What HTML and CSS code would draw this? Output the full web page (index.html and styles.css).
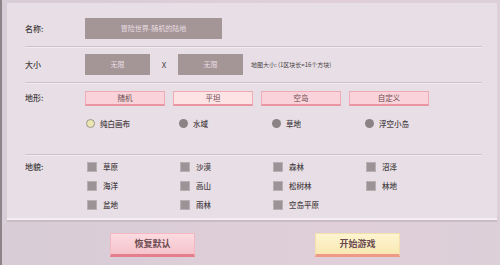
FILE: index.html
```html
<!DOCTYPE html>
<html lang="zh">
<head>
    <meta charset="UTF-8">
    <title>创建世界</title>
    <link rel="stylesheet" href="styles.css">
</head>
<body>
    <div class="panel">
        <!-- 名称 -->
        <div class="row row-name">
            <div class="label">名称:</div>
            <div class="field field-wide">冒险世界-随机的陆地</div>
        </div>

        <!-- 大小 -->
        <div class="row row-size">
            <div class="label">大小</div>
            <div class="field field-small">无限</div>
            <div class="times">X</div>
            <div class="field field-small">无限</div>
            <div class="hint">地图大小: (1区块长=16个方块)</div>
        </div>

        <!-- 地形 -->
        <div class="row row-terrain">
            <div class="label">地形:</div>
            <div class="terrain">
                <div class="tabs">
                    <div class="tab">随机</div>
                    <div class="tab">平坦</div>
                    <div class="tab">空岛</div>
                    <div class="tab">自定义</div>
                </div>
                <div class="options">
                    <div class="opt"><span class="radio on"></span>纯白画布</div>
                    <div class="opt"><span class="radio"></span>水域</div>
                    <div class="opt"><span class="radio"></span>草地</div>
                    <div class="opt"><span class="radio"></span>浮空小岛</div>
                </div>
            </div>
        </div>

        <!-- 地貌 -->
        <div class="row row-biome">
            <div class="label">地貌:</div>
            <div class="options biomes">
                <div class="opt"><span class="check"></span>草原</div>
                <div class="opt"><span class="check"></span>沙漠</div>
                <div class="opt"><span class="check"></span>森林</div>
                <div class="opt"><span class="check"></span>沼泽</div>
                <div class="opt"><span class="check"></span>海洋</div>
                <div class="opt"><span class="check"></span>高山</div>
                <div class="opt"><span class="check"></span>松树林</div>
                <div class="opt"><span class="check"></span>林地</div>
                <div class="opt"><span class="check"></span>盆地</div>
                <div class="opt"><span class="check"></span>雨林</div>
                <div class="opt"><span class="check"></span>空岛平原</div>
            </div>
        </div>
    </div>

    <div class="actions">
        <div class="btn btn-reset">恢复默认</div>
        <div class="btn btn-start">开始游戏</div>
    </div>
</body>
</html>
```

FILE: styles.css
```css
body {
    margin: 0;
    width: 500px;
    height: 265px;
    overflow: hidden;
    background: linear-gradient(to right, #d8ccd6, #e0cfd9 70%, #dccfd8);
    font-family: "Noto Sans CJK SC", "Noto Sans", sans-serif;
    color: #4a4246;
    border-left: 2px solid #8c8488;
    box-sizing: border-box;
}

.panel {
    margin: 3px 3px 0 5px;
    height: 215px;
    padding: 0 15px 0 18px;
    background: #e7dfe5;
    border-bottom: 2px solid #f4eef2;
    box-shadow: 0 2px 0 #c9bcc5;
}

.row {
    display: flex;
    align-items: flex-start;
    border-bottom: 1px solid #cfc3cb;
    box-shadow: 0 1px 0 #f2ecf0;
}

.label {
    width: 60px;
    flex-shrink: 0;
    font-size: 8px;
    font-weight: 500;
    color: #443c40;
}

.row-name {
    height: 28px;
    padding-top: 15px;
}

.row-name .label {
    line-height: 21px;
}

.field {
    height: 21px;
    line-height: 21px;
    background: #a49597;
    color: #eadfe2;
    font-size: 7px;
    text-align: center;
}

.field-wide {
    width: 137px;
}

.row-size {
    height: 28px;
    padding-top: 7px;
}

.row-size .label,
.row-size .times,
.row-size .hint {
    line-height: 21px;
}

.field-small {
    width: 65px;
}

.times {
    width: 28px;
    text-align: center;
    font-size: 8px;
}

.hint {
    margin-left: 8px;
    font-size: 6px;
    color: #4a4246;
}

.row-terrain {
    height: 63px;
    padding-top: 8px;
}

.row-terrain .label {
    line-height: 14px;
}

.tabs {
    display: flex;
    gap: 8px;
}

.tab {
    width: 78px;
    height: 12px;
    line-height: 12px;
    font-size: 7.5px;
    text-align: center;
    color: #6b4b52;
    background: #f9d3d9;
    border: 1px solid #eeaab5;
    border-bottom: 2px solid #e995a2;
}

.tab:nth-child(2) {
    background: #fde3e4;
}

.options {
    display: grid;
    grid-template-columns: repeat(4, 93px);
    margin-top: 8px;
    font-size: 7.5px;
    font-weight: 500;
    color: #4a4246;
}

.opt {
    display: flex;
    align-items: center;
    height: 19px;
}

.radio {
    width: 9px;
    height: 9px;
    border-radius: 50%;
    background: #8a8385;
    margin: 0 5px 0 1px;
}

.radio.on {
    background: #ece7b0;
    border: 1.5px solid #9a9590;
    width: 7px;
    height: 7px;
}

.row-biome {
    height: 62px;
    border-bottom: none;
    box-shadow: none;
    padding-top: 2px;
}

.row-biome .label {
    line-height: 19px;
}

.biomes {
    margin-top: 0;
    margin-left: 2px;
}

.check {
    width: 8px;
    height: 8px;
    background: #9b9395;
    border: 1px solid #b8afb3;
    margin-right: 6px;
}

.actions {
    display: flex;
    gap: 120px;
    padding: 13px 0 0 108px;
}

.btn {
    width: 83px;
    height: 20px;
    line-height: 20px;
    text-align: center;
    font-size: 9px;
    font-weight: bold;
    color: #6a4a50;
}

.btn-reset {
    background: linear-gradient(#fbdbe0, #f6c3cb);
    border: 1px solid #f3b8c1;
    border-bottom: 3px solid #e47e8d;
}

.btn-start {
    background: linear-gradient(#fdf4cf, #f9e8b4);
    border: 1px solid #f4dfae;
    border-bottom: 3px solid #ef9a86;
}
```
